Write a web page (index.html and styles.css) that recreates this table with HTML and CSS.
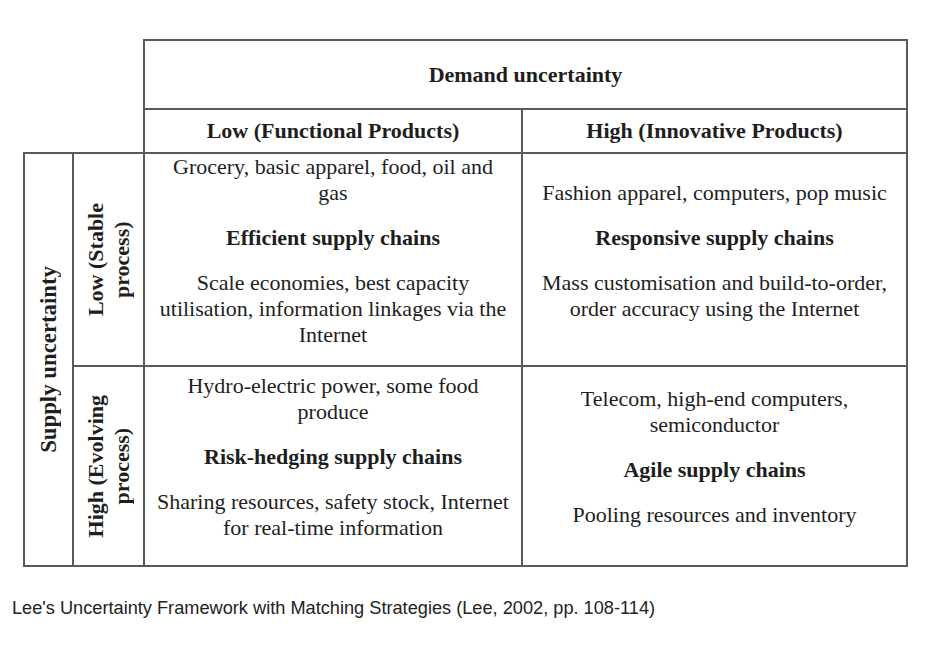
FILE: index.html
```html
<!DOCTYPE html>
<html>
<head>
<meta charset="utf-8">
<link rel="stylesheet" href="styles.css">
</head>
<body>
<div class="page">
  <div class="matrix">
    <div class="blank"></div>
    <div class="cell demand head">Demand uncertainty</div>
    <div class="cell colhead low-h head">Low (Functional Products)</div>
    <div class="cell colhead high-h head r">High (Innovative Products)</div>
    <div class="cell supply b"><span class="vert head big">Supply uncertainty</span></div>
    <div class="cell rowhead"><span class="vert head">Low (Stable<br>process)</span></div>
    <div class="cell rowhead b"><span class="vert head">High (Evolving<br>process)</span></div>
    <div class="cell body c1">
      <p>Grocery, basic apparel, food, oil and<br>gas</p>
      <p class="strong">Efficient supply chains</p>
      <p>Scale economies, best capacity<br>utilisation, information linkages via the<br>Internet</p>
    </div>
    <div class="cell body c2 r">
      <p>Fashion apparel, computers, pop music</p>
      <p class="strong">Responsive supply chains</p>
      <p>Mass customisation and build-to-order,<br>order accuracy using the Internet</p>
    </div>
    <div class="cell body c3 b">
      <p>Hydro-electric power, some food<br>produce</p>
      <p class="strong">Risk-hedging supply chains</p>
      <p>Sharing resources, safety stock, Internet<br>for real-time information</p>
    </div>
    <div class="cell body c4 r b">
      <p>Telecom, high-end computers,<br>semiconductor</p>
      <p class="strong">Agile supply chains</p>
      <p>Pooling resources and inventory</p>
    </div>
  </div>
  <p class="caption">Lee's Uncertainty Framework with Matching Strategies (Lee, 2002, pp. 108-114)</p>
</div>
</body>
</html>
```

FILE: styles.css
```css
html, body {
  margin: 0;
  padding: 0;
  background: #ffffff;
}

.page {
  padding: 39px 0 0 23px;
  font-family: "Liberation Serif", "Times New Roman", serif;
  color: #1e1e1e;
}

.matrix {
  display: grid;
  grid-template-columns: 49px 71px 378px 387px;
  grid-template-rows: 69px 44px 213px 202px;
}

.blank {
  grid-column: 1 / 3;
  grid-row: 1 / 3;
}

.cell {
  box-sizing: border-box;
  border-top: 2px solid #5a5a5a;
  border-left: 2px solid #5a5a5a;
  display: flex;
  align-items: center;
  justify-content: center;
  text-align: center;
  font-size: 22px;
  line-height: 26px;
  white-space: nowrap;
}

.cell.r { border-right: 2px solid #5a5a5a; }
.cell.b { border-bottom: 2px solid #5a5a5a; }

.head { font-weight: bold; }

.demand {
  grid-column: 3 / 5;
  grid-row: 1;
  border-right: 2px solid #5a5a5a;
}

.low-h { grid-column: 3; grid-row: 2; }
.high-h { grid-column: 4; grid-row: 2; }

.supply { grid-column: 1; grid-row: 3 / 5; }
.rowhead { grid-column: 2; }

.vert {
  writing-mode: vertical-rl;
  transform: rotate(180deg);
}

.vert.big {
  font-size: 22.8px;
}

.body {
  flex-direction: column;
  padding: 0 0 18px;
}

.body p {
  margin: 0;
}

.body p + p {
  margin-top: 19px;
}

.body .strong { font-weight: bold; }

.c1 { grid-column: 3; grid-row: 3; }
.c2 { grid-column: 4; grid-row: 3; }
.c3 { grid-column: 3; grid-row: 4; }
.c4 { grid-column: 4; grid-row: 4; }

.caption {
  margin: 31px 0 0 -11px;
  font-family: "Liberation Sans", Arial, sans-serif;
  font-size: 18.2px;
  color: #222;
}
```
